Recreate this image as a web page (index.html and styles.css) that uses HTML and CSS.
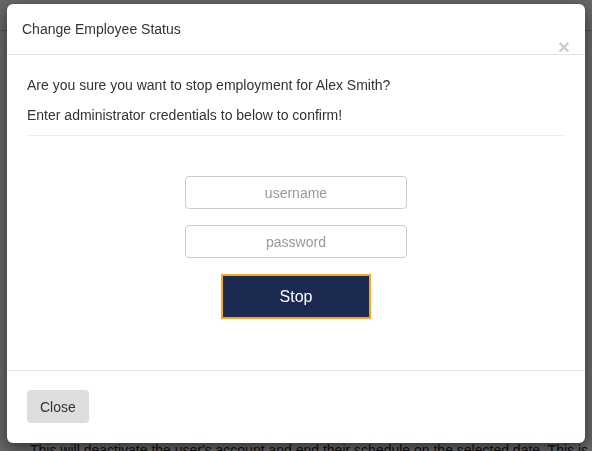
FILE: index.html
```html
<!DOCTYPE html>
<html>
<head>
<meta charset="utf-8">
<link rel="stylesheet" href="styles.css">
</head>
<body>
<div class="page">
  <div class="topbar"></div>
  <div class="page-content">
    <p class="bg-text">This will deactivate the user's account and end their schedule on the selected date. This is final.</p>
  </div>
</div>
<div class="backdrop">
  <div class="modal">
    <div class="modal-header">
      <h4 class="modal-title">Change Employee Status</h4>
      <span class="close">&times;</span>
    </div>
    <div class="modal-body">
      <p class="msg">Are you sure you want to stop employment for Alex Smith?</p>
      <p class="msg last">Enter administrator credentials to below to confirm!</p>
      <hr class="divider">
      <div class="form">
        <input class="field" type="text" placeholder="username">
        <input class="field" type="password" placeholder="password">
        <button class="stop-btn">Stop</button>
      </div>
    </div>
    <div class="modal-footer">
      <button class="close-btn">Close</button>
    </div>
  </div>
</div>
</body>
</html>
```
FILE: styles.css
```css
* { box-sizing: border-box; }
html, body { margin: 0; padding: 0; }
body {
  width: 592px;
  height: 451px;
  overflow: hidden;
  font-family: "Liberation Sans", Arial, sans-serif;
  font-size: 14px;
  color: #333;
  background: #fff;
}
.page { height: 451px; overflow: hidden; }
.topbar { height: 31px; border-bottom: 1px solid #ccc; }
.page-content { padding: 409px 0 0 30px; }
.bg-text { margin: 0; white-space: nowrap; font-size: 14px; line-height: 20px; color: #222; }

.backdrop {
  position: fixed;
  inset: 0;
  background: rgba(0, 0, 0, 0.6);
  display: flex;
  justify-content: center;
  align-items: flex-start;
  padding-top: 4px;
}
.modal {
  width: 578px;
  background: #fff;
  border-radius: 6px;
  box-shadow: 0 5px 15px rgba(0, 0, 0, 0.5);
}
.modal-header {
  position: relative;
  padding: 15px;
  border-bottom: 1px solid #e5e5e5;
}
.modal-title {
  margin: 0;
  font-size: 14px;
  font-weight: normal;
  line-height: 20px;
  color: #333;
}
.close {
  position: absolute;
  right: 15px;
  top: 32px;
  font-size: 21px;
  font-weight: bold;
  line-height: 1;
  color: #000;
  opacity: 0.2;
}
.modal-body { padding: 20px 20px 0; }
.msg { margin: 0 0 10px; line-height: 20px; color: #333; }
.msg.last { margin-bottom: 0; }
.divider { margin: 10px 0 0; border: 0; border-top: 1px solid #eee; }
.form {
  display: flex;
  flex-direction: column;
  align-items: center;
  gap: 16px;
  padding: 40px 0 51px;
}
.field {
  width: 222px;
  height: 33px;
  border: 1px solid #ccc;
  border-radius: 4px;
  text-align: center;
  font-family: "Liberation Sans", Arial, sans-serif;
  font-size: 14px;
  color: #555;
  padding: 0 10px;
  outline: none;
}
.field::placeholder { color: #999; }
.stop-btn {
  width: 150px;
  height: 45px;
  background: #1b2a50;
  border: 2px solid #f5a623;
  border-radius: 0;
  color: #fff;
  font-family: "Liberation Sans", Arial, sans-serif;
  font-size: 16px;
}
.modal-footer {
  border-top: 1px solid #e5e5e5;
  padding: 19px 20px 20px;
  display: flex;
}
.close-btn {
  height: 33px;
  padding: 0 13px;
  background: #ddd;
  border: 0;
  border-radius: 4px;
  color: #333;
  font-family: "Liberation Sans", Arial, sans-serif;
  font-size: 14px;
}
```
